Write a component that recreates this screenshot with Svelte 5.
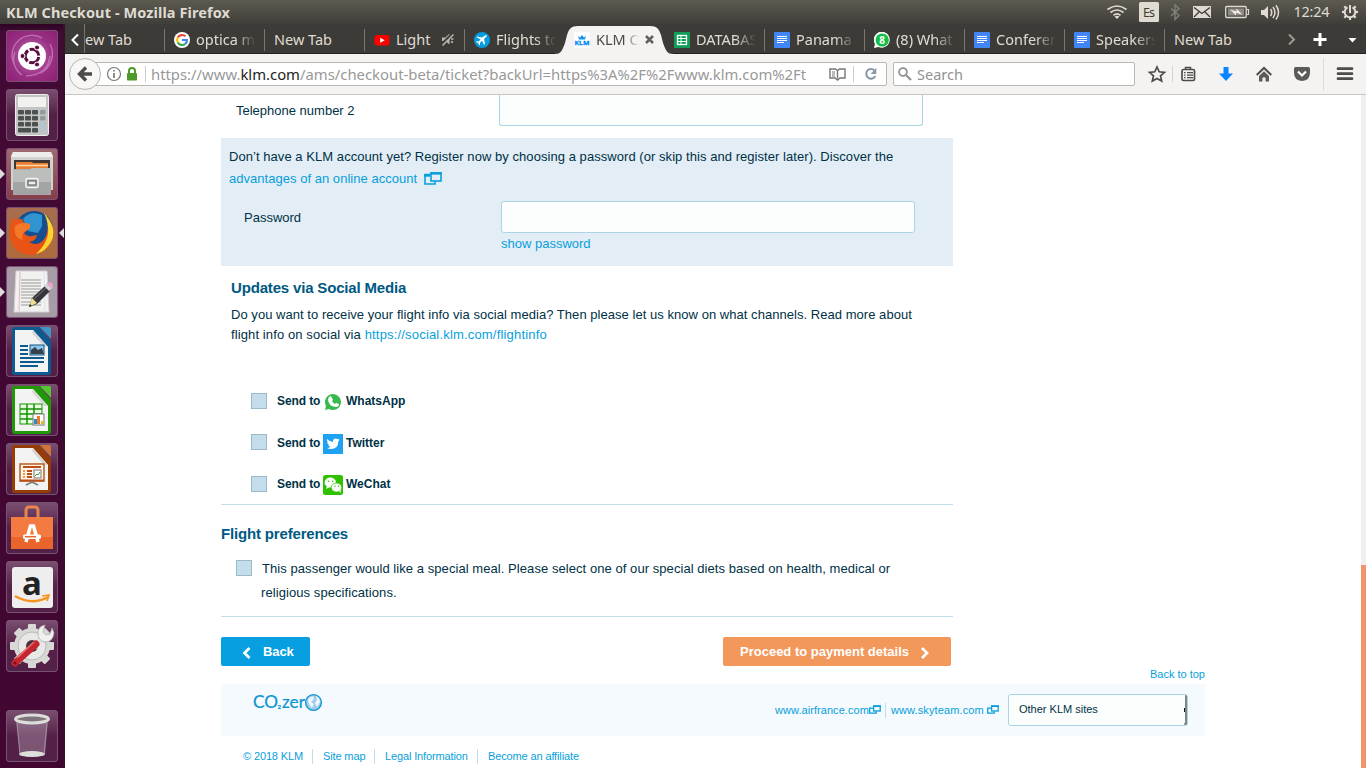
<script>
  const tabs = [
    { icon: '', text: 'ew Tab', first: true },
    { icon: 'google', text: 'optica m' },
    { icon: '', text: 'New Tab' },
    { icon: 'youtube', text: 'Light', muted: true },
    { icon: 'plane', text: 'Flights to' },
    { icon: 'klm', text: 'KLM C', active: true },
    { icon: 'sheet', text: 'DATABAS' },
    { icon: 'doc', text: 'Panama' },
    { icon: 'whats', text: '(8) What' },
    { icon: 'doc', text: 'Conferen' },
    { icon: 'doc', text: 'Speakers' },
    { icon: '', text: 'New Tab', last: true }
  ];
  const apps = ['dash', 'calc', 'files', 'firefox', 'gedit', 'writer', 'sheets', 'impress', 'software', 'amazon', 'settings', 'trash'];
  const running = ['files', 'firefox', 'gedit'];
  const office = {
    writer: ['#0c5a8f', '#3f95c6'],
    sheets: ['#1f9a06', '#53c832'],
    impress: ['#963c06', '#d0743a']
  };
  const socials = ['WhatsApp', 'Twitter', 'WeChat'];
</script>

<div class="screen">
  <header class="titlebar">
    <span class="wintitle">KLM Checkout - Mozilla Firefox</span>
    <svg class="tray" width="260" height="24" viewBox="1106 0 260 24">
      <g fill="none" stroke="#dfdbd2" stroke-width="1.7">
        <path d="M1107.500 9.500 Q1117 2.500 1126.500 9.500M1110.500 12.500 Q1117 7.500 1123.500 12.500M1113.500 15.300 Q1117 12.500 1120.500 15.300" />
      </g>
      <path d="M1114.500 16.500 Q1117 14.800 1119.500 16.500 L1117 19Z" fill="#dfdbd2" />
      <rect x="1139" y="2" width="20" height="20" rx="1.500" fill="#dfdbd2" />
      <text x="1143" y="17" font-size="12.500" fill="#3c3b37" textLength="12">Es</text>
      <path d="M1171 8.500 L1179 15.500 L1175 19.500 V5 L1179 8.500 L1171 16" fill="none" stroke="#85837c" stroke-width="1.300" />
      <rect x="1193" y="6" width="18" height="12" fill="#dfdbd2" />
      <path d="M1194 7.500 L1202 13.500 L1210 7.500M1194 17 L1199 12M1210 17 L1205 12" fill="none" stroke="#3c3b37" stroke-width="1.300" />
      <rect x="1225.700" y="6.500" width="20.500" height="11" rx="1" fill="none" stroke="#dfdbd2" stroke-width="1.300" />
      <rect x="1228" y="8.500" width="16" height="7" fill="#8f8c84" /><path d="M1247 9.500h1.500v5h-1.500" fill="none" stroke="#dfdbd2" stroke-width="1.200" />
      <path d="M1230 9.500 L1236.500 11.500 L1236.500 8.500 L1242.500 14.800 L1236 12.800 L1236 15.500Z" fill="#efece5" />
      <path d="M1261 10h3l4-4v13l-4-4h-3z" fill="#dfdbd2" />
      <path d="M1270.500 9 Q1273 12.500 1270.500 16M1273 7 Q1277 12.500 1273 18M1276 5.300 Q1281 12.500 1276 19.500" fill="none" stroke="#dfdbd2" stroke-width="1.500" />
      <text x="1293.500" y="17.300" font-size="14.500" fill="#dfdbd2" textLength="36">12:24</text>
      <g stroke="#dfdbd2" fill="none" transform="translate(1350 12)">
        <path d="M-2.500 -4.600 A5.300 5.300 0 1 0 2.500 -4.600" stroke-width="2" />
        <path d="M0 -7V1" stroke-width="2" />
        {#each [45, 90, 135, 180, 225, 270, 315] as a}<path d="M0 -5.500V-8" stroke-width="2.200" transform={`rotate(${a})`} />{/each}
      </g>
    </svg>
  </header>

  <div class="desktop">
    <nav class="launcher">
      {#each apps as app}
        <div class={`tile ${app}`}>
          {#if running.includes(app)}<i class="arrow"></i>{/if}
          {#if app === 'firefox'}<i class="arrow focus"></i>{/if}
          <svg width="52" height="52" viewBox="0 0 52 52">
            {#if app === 'dash'}
              <g fill="none" stroke="#d99bd0" stroke-opacity=".55" stroke-width="1.500">
                <path d="M8 34 A20 20 0 0 1 36 8M44 14 A21 21 0 0 1 34 43M16 45 A19 19 0 0 1 9 22M20 46 Q42 45 44 26" />
              </g>
              <circle cx="26" cy="26" r="14" fill="#fff" />
              <circle cx="26" cy="26" r="6.800" fill="none" stroke="#5b1042" stroke-width="3" stroke-dasharray="12.500 1.740" stroke-dashoffset="-1" />
              <g fill="#5b1042" stroke="#fff"><circle cx="16.500" cy="26" r="2.500" /><circle cx="31" cy="17.500" r="2.500" /><circle cx="31" cy="34.500" r="2.500" /></g>
            {:else if app === 'calc'}
              <rect x="9.500" y="5.500" width="33" height="41" rx="2" fill="#c4c4c2" stroke="#eee" />
              <rect x="12" y="8" width="28" height="10" fill="#f1f1ef" />
              {#each [0, 1, 2] as r}{#each [0, 1, 2] as c}<rect x={12 + c * 7} y={21 + r * 6} width="6" height="4.500" rx="1" fill="#4b5150" />{/each}<rect x="34" y={21 + r * 6} width="5.500" height="4.500" rx="1" fill="#8d9aa2" />{/each}
              <rect x="12" y="39" width="13" height="4.500" rx="1" fill="#4b5150" /><rect x="26" y="39" width="6" height="4.500" rx="1" fill="#4b5150" /><rect x="34" y="33" width="5.500" height="10.500" rx="1" fill="#b3c4cf" />
            {:else if app === 'files'}
              <path d="M7 4h38l2 4v34H5V8z" fill="#d2d2d0" /><path d="M7 4h38l2 5H5z" fill="#ededeb" />
              <path d="M8 12h36v10H8z" fill="#3b3634" /><path d="M10 14h16l1 1h15v7H10z" fill="#e87e34" /><path d="M10 17.500h32" stroke="#ffd8a5" stroke-width="1.500" />
              <path d="M7 21h17l2-1h19v27H7z" fill="#a3a5a4" /><path d="M7 21.500h17l2-1.500h19v14H7z" fill="#bcbebc" />
              <rect x="20" y="30.500" width="12" height="9" rx="1.500" fill="#b4b6b4" stroke="#f3f3f1" stroke-width="1.500" /><rect x="22" y="33" width="8" height="4" fill="#eee" stroke="#555" />
            {:else if app === 'firefox'}
              <circle cx="28" cy="23" r="19" fill="#164f91" /><path d="M17 12 Q24 3 36 8 L36 19 L32 26 L22 24Z" fill="#2f94cf" />
              <path d="M7 10 Q8 14 13 12 Q16 11 18 16 L24 17 L24 21 L18 26 Q21 31 31 28 Q30 34 23 35 Q34 41 40 29 Q43 20 41 12 Q49 19 47 30 Q43 45 27 48 Q8 48 4 31 Q3 18 7 10Z" fill="#e85416" />
              <path d="M38 6 Q51 20 46 33 Q40 45 30 47 Q40 38 42 27 Q43 16 38 6Z" fill="#ffd42c" />
              <path d="M9 19 Q15 14 24 17 L24 21 L18 25 Q15 29 17 33 Q7 31 9 19Z" fill="#f6792a" />
            {:else if app === 'gedit'}
              <path d="M10 5h31l2 41H8z" fill="#f1f1f0" stroke="#d4d1d2" /><path d="M14 6l-1 39" stroke="#e9b4bb" /><path d="M38 6l1 39" stroke="#dde3ee" />
              {#each [14, 17, 20, 23, 26, 29, 32, 36, 39] as y}<path d={`M15 ${y}h${y === 32 ? 14 : 20}`} stroke="#9b9b9b" />{/each}
              <path d="M23 41l3-9 13-12 5 5-13 13z" fill="#34353a" /><path d="M28 33l13-12" stroke="#777" /><path d="M23 41l3-9 5 5z" fill="#eddc92" /><path d="M23 41l1-3 2 2z" fill="#222" /><path d="M38 20l3-3 5 5-3 3z" fill="#d5d5d5" /><path d="M41 17q3-2 5 0t1 5l-1 1-5-5z" fill="#e8a2cc" />
            {:else if office[app]}
              <path d="M8 2h25l12 14v31q0 3-3 3H9q-3 0-3-3V5q0-3 2-3z" fill={office[app][0]} />
              <path d="M9 5h18l15 17v25H9z" fill="#f3f3f3" /><path d="M27 5l15 17h-4L26 8z" fill="#d6d6d6" /><path d="M34 2h9q2 0 2 2v10z" fill={office[app][1]} />
              {#if app === 'writer'}
                <g stroke="#0c5a8f" stroke-width="2"><path d="M14 21h8M14 25h8M14 29h8M14 33h24M14 37h24M14 41h18" /></g><rect x="24" y="20" width="14" height="10" fill="#8cc8ed" stroke="#145680" /><path d="M25 29v-4l4-3 3 3 4-2 2 6z" fill="#34424a" />
              {:else if app === 'sheets'}
                <rect x="14" y="20" width="22" height="20" fill="#e8ffe0" stroke="#169106" /><path d="M14 25h22M14 30h22M14 35h22M21 20v20M28 20v20" stroke="#169106" stroke-width="1.500" /><rect x="27" y="30" width="11" height="11" fill="#fff" stroke="#777" /><path d="M28 35h3v5h-3z" fill="#2b8bc9" /><path d="M31 32h3v8h-3z" fill="#ed7a28" /><path d="M35 37h2v3h-2z" fill="#eab900" />
              {:else}
                <rect x="14" y="21" width="24" height="17" fill="#fff4e8" stroke="#be5b1e" stroke-width="1.500" /><path d="M14 37.500h24M17 24h18M21 28h5M21 31h5M21 34h5" stroke="#b95018" stroke-width="2" /><path d="M17 28h2M17 31h2M17 34h2" stroke="#ed9558" stroke-width="2" /><rect x="28" y="27" width="7" height="8" fill="#fff" stroke="#777" /><path d="M29 33l2-2 1 1 2-3" fill="none" stroke="#39a336" /><path d="M26 38v2M20 42l6-3 6 3" fill="none" stroke="#777" stroke-width="1.500" />
              {/if}
            {:else if app === 'software'}
              <path d="M5 15h42v32H5z" fill="#e9652b" /><path d="M5 15h42v20H5z" fill="#f37a40" /><path d="M20 18v-9q0-4 3-4h6q3 0 3 4v9" fill="none" stroke="#e7854f" stroke-width="3" />
              <path d="M20 40l4.500-16h3L32 40" fill="none" stroke="#fff" stroke-width="3.500" /><rect x="17" y="32.500" width="18" height="4.500" rx="1.500" fill="#fff" /><path d="M19 34.700h11" stroke="#e9652b" stroke-width="1.500" />
            {:else if app === 'amazon'}
              <rect x="6" y="6" width="41" height="41" rx="3" fill="#eee" /><text x="16" y="34" font-size="33" font-weight="700" fill="#222">a</text><path d="M9 35 Q26 45 42 36" fill="none" stroke="#f6951e" stroke-width="2.500" /><path d="M36 35l7-1-2 6" fill="none" stroke="#f6951e" stroke-width="1.700" />
            {:else if app === 'settings'}
              <g fill="#d8d8d6">{#each [0, 45, 90, 135] as a}<rect x="22" y="4" width="8" height="44" rx="1" transform={`rotate(${a} 26 26)`} />{/each}<circle cx="26" cy="26" r="18" /></g><circle cx="26" cy="26" r="14" fill="#e8e8e6" stroke="#bbb" /><circle cx="26" cy="26" r="6" fill="#4d3344" /><path d="M28 27l8-9" stroke="#e4e4e2" stroke-width="6" />
              <path d="M39 5q-7 1-7 8 0 8 7 9 8 0 9-9l-2-5-2 6-4 1-3-3z" fill="#f0f0ee" stroke="#aaa" stroke-width=".7" /><path d="M9 43l21-19" stroke="#c3262e" stroke-width="7" stroke-linecap="round" /><path d="M11 38l17-16" stroke="#ee746f" stroke-width="1.300" /><circle cx="9" cy="43" r="1.500" fill="#701019" />
            {:else}
              <path d="M10 10l4 35q12 4 25 0l3-35z" fill="#d8d5df" opacity=".3" /><ellipse cx="26" cy="9" rx="16.500" ry="4" fill="#80737e" stroke="#ddddda" stroke-width="3" /><ellipse cx="26" cy="44" rx="13" ry="3" fill="#dededb" /><path d="M11 13l3 32M41 13l-3 32" stroke="#b9a6b8" opacity=".7" />
            {/if}
          </svg>
        </div>
      {/each}
    </nav>

    <section class="browser">
      <div class="tabs">
        <div class="scroll"><svg width="19" height="30" viewBox="0 0 19 30"><path d="M13 10.500l-5.500 5.500 5.500 5.500" fill="none" stroke="#fff" stroke-width="2" /></svg></div>
        {#each tabs as tab}
          <div class="tab" class:first={tab.first} class:active={tab.active} class:last={tab.last} class:before={tab.icon === 'plane'}>
            {#if tab.active}<svg class="shape" width="120" height="28" viewBox="0 0 120 28"><path d="M0 28 C7 28 8 25 11 17 L13 9 C15 3 17 0 24 0 H96 C103 0 105 3 107 9 L109 17 C112 25 113 28 120 28Z" fill="#f4f3f1" /></svg>{/if}
            {#if tab.icon}
              <svg class="fav" width="16" height="16" viewBox="0 0 16 16">
                {#if tab.icon === 'google'}
                  <circle cx="8" cy="8" r="8" fill="#fff" /><g fill="none" stroke-width="2.200"><path d="M11.500 4.300A5 5 0 0 0 3.800 5.500" stroke="#ea4335" /><path d="M3.800 5.500A5 5 0 0 0 3.800 10.500" stroke="#fbbc05" /><path d="M3.800 10.500A5 5 0 0 0 11.200 11.900" stroke="#34a853" /><path d="M11.200 11.900Q13 10.500 12.900 8H8" stroke="#4285f4" /></g>
                {:else if tab.icon === 'youtube'}<rect x="0.500" y="3" width="15" height="10.500" rx="2.500" fill="#f00" /><path d="M6.200 5.800l4.500 2.500-4.500 2.500z" fill="#fff" />
                {:else if tab.icon === 'plane'}<circle cx="8" cy="8" r="8" fill="#079bdf" /><path d="M12 3l1 1-3 3 1 5-1 .700L8 8.700l-2 2v2l-.800.600-1-2.400-2.200-1 .600-.700 2 .200 2-2-4-2.200.700-.800 4.700 1z" fill="#fff" />
                {:else if tab.icon === 'klm'}<rect width="16" height="16" fill="#fff" /><path d="M4 4l2 1.500L8 3l2 2.500L12 4l-1 3.500H5z" fill="#1695ed" /><text x="0.500" y="13.200" font-size="6" font-weight="700" fill="#098cf0" stroke="#098cf0" stroke-width=".3" textLength="15" lengthAdjust="spacingAndGlyphs">KLM</text>
                {:else if tab.icon === 'sheet'}<rect width="16" height="16" fill="#0f9d58" /><rect x="3.500" y="3.500" width="9" height="9" fill="none" stroke="#fff" stroke-width="1.300" /><path d="M3 6.500h10M3 9.500h10M7 3v10" stroke="#fff" />
                {:else if tab.icon === 'doc'}<rect width="16" height="16" rx="1" fill="#4285f4" /><path d="M3 4.500h10M3 6.500h10M3 8.500h10M3 10.500h7" stroke="#fff" />
                {:else}<path d="M0 16l1-4A8 8 0 1 1 4.500 15z" fill="#fff" /><circle cx="8.200" cy="8" r="6.600" fill="#0fc143" /><text x="5.300" y="11.700" font-size="10" font-weight="700" fill="#fff">8</text>{/if}
              </svg>
            {/if}
            <span class="label" class:short={tab.muted || tab.active} class:fade={tab.icon && !tab.muted}>{tab.text}</span>
            {#if tab.muted}<svg class="mute" width="13" height="13" viewBox="0 0 13 13"><path d="M1 4.500h3.500l4-4v11l-4-3.500H1z" fill="#b9b7b0" /><path d="M0 12L12 0" stroke="#3c3b37" stroke-width="2.500" /><path d="M1.500 12.500L12.500 1.500M10 6h2.500M10 8.500l2 1" stroke="#b9b7b0" stroke-width="1.500" /></svg>{/if}
            {#if tab.active}<svg class="close" width="9" height="9" viewBox="0 0 9 9"><path d="M1 1l7 7M8 1L1 8" stroke="#61615f" stroke-width="2.500" /></svg>{/if}
          </div>
        {/each}
        <svg class="tabctl" width="102" height="30" viewBox="1264 24 102 30"><path d="M1288 34.500l5 5-5 5" fill="none" stroke="#9c9a94" stroke-width="2" /><path d="M1312.500 39.500h13M1319 33v13" stroke="#fff" stroke-width="3" /><path d="M1347.500 38h8l-4 4.500z" fill="#fff" /></svg>
      </div>

      <div class="toolbar">
        <div class="back"><svg width="30" height="30" viewBox="0 0 30 30"><path d="M22 15H10M16 8.500L9.500 15l6.500 6.500" fill="none" stroke="#4c4c4a" stroke-width="3.400" /></svg></div>
        <div class="url">
          <svg width="16" height="16" viewBox="0 0 16 16"><circle cx="8" cy="8" r="6.500" fill="none" stroke="#777" stroke-width="1.200" /><path d="M8 7v5M8 4v1.500" stroke="#666" stroke-width="1.500" /></svg>
          <svg width="12" height="14" viewBox="0 0 12 14"><path d="M3 7V4q0-3 3-3t3 3v3" fill="none" stroke="#4d9a2a" stroke-width="2" /><rect x="1" y="6" width="10" height="7.500" rx=".7" fill="#4d9a2a" /></svg>
          <i class="bar"></i>
          <span class="address">https://www.<b>klm.com</b>/ams/checkout-beta/ticket?backUrl=https%3A%2F%2Fwww.klm.com%2Ft</span>
          <svg class="reader" width="17" height="14" viewBox="0 0 17 14"><path d="M1 2h5.500l2 1.500 2-1.500H16v9h-5l-2.500 2L6 11H1zM8.500 3.500v8" fill="none" stroke="#777" stroke-width="1.400" /><path d="M3 5h3M3 7h3M3 9h3" stroke="#777" /></svg>
          <i class="bar"></i>
          <svg class="reload" width="14" height="14" viewBox="0 0 14 14"><path d="M10.500 3.500A4.800 4.800 0 1 0 11.300 9" fill="none" stroke="#8999a9" stroke-width="2" /><path d="M12.300 1v6H6.500z" fill="#8999a9" /></svg>
        </div>
        <div class="search"><svg width="14" height="14" viewBox="0 0 14 14"><circle cx="5" cy="5" r="3.900" fill="none" stroke="#929292" stroke-width="1.800" /><path d="M8 8l5 5" stroke="#929292" stroke-width="2.200" /></svg><span>Search</span></div>
        <svg class="tools" width="231" height="40" viewBox="1135 54 231 40">
          <path d="M1157 67l2.200 4.800 5.300.600-4 3.500 1.200 5.200-4.700-2.700-4.700 2.700 1.200-5.200-4-3.500 5.300-.600z" fill="none" stroke="#4c4c4a" stroke-width="1.700" />
          <path d="M1172.500 66v16" stroke="#d5d3d0" /><path d="M1323.500 58v33" stroke="#dddbd8" />
          <rect x="1182" y="69.500" width="12.500" height="11" rx="1.500" fill="none" stroke="#4c4c4a" stroke-width="1.700" /><path d="M1185.500 69.500v-2h5v2" fill="none" stroke="#4c4c4a" stroke-width="1.500" /><path d="M1184 72.700h1.500M1184 75.200h1.500M1184 77.700h1.500M1187 72.700h6M1187 75.200h6M1187 77.700h6" stroke="#4c4c4a" stroke-width="1.200" />
          <path d="M1223.500 67h5v6.500h4.500l-7 7.500-7-7.500h4.500z" fill="#0a84ff" />
          <path d="M1256.700 75l7.300-7 7.300 7" fill="none" stroke="#4c4c4a" stroke-width="2" /><path d="M1259 76l5-4.800 5 4.800v5.500h-3.500v-4h-3v4h-3.500z" fill="#5b5b59" />
          <path d="M1295.500 67h13q1.500 0 1.500 1.500v4q0 8-8 8.500-8-.500-8-8.500v-4q0-1.500 1.500-1.500z" fill="#5b5b59" /><path d="M1298 71.500l4 4 4-4" fill="none" stroke="#fff" stroke-width="2.200" />
          <path d="M1338 68.700h14M1338 73.700h14M1338 78.700h14" stroke="#4c4c4a" stroke-width="2.700" stroke-linecap="round" />
        </svg>
      </div>

      <div class="viewport">
        <main>
          <div class="column">
            <div class="phone"><span>Telephone number 2</span><div class="input"></div></div>
            <div class="panel">
              <p class="intro">Don’t have a KLM account yet? Register now by choosing a password (or skip this and register later). Discover the</p>
              <p class="adv"><a href="#adv">advantages of an online account</a><svg width="18" height="13" viewBox="0 0 18 13"><path d="M6 2.500H1V12h10V9.500" fill="none" stroke="#079fdc" stroke-width="1.600" /><path d="M.200 3.500H6" stroke="#079fdc" stroke-width="2.400" /><rect x="7" y="1" width="10" height="8" fill="#e3edf6" stroke="#079fdc" stroke-width="1.600" /><path d="M6.200 1.400h11.600" stroke="#079fdc" stroke-width="2.400" /></svg></p>
              <div class="pass"><span>Password</span><div class="input"></div></div>
              <a class="show" href="#show">show password</a>
            </div>
            <h2 class="updates">Updates via Social Media</h2>
            <p class="social">
              <span class="s1">Do you want to receive your flight info via social media? Then please let us know on what channels. Read more about</span><br />
              <span class="s2">flight info on social via <a href="#social">https://social.klm.com/flightinfo</a></span>
            </p>
            <div class="channels">
              {#each socials as s}
                <div class={`channel ${s}`}><i class="check"></i><span class="send">Send to</span>
                  <svg width="20" height="20" viewBox="0 0 20 20">
                    {#if s === 'WhatsApp'}<path d="M2 18l1-4A8 8 0 1 1 6 17z" fill="#36b94d" /><path d="M6 5l2-1 2 4-1 1q1 2 3 3l1-1 3 1q0 3-3 3-8-1-8-8z" fill="#fff" />
                    {:else if s === 'Twitter'}<rect width="20" height="20" fill="#1da1f2" /><path d="M4 5q3 3 6 3-.500-3.500 3-3.500l2 .700 1.500-.500-1 1.700 1-.200-1.300 1.500q0 7.300-7.200 7.300-2.500 0-4-1 2 0 3.500-1.200-2-.300-2.500-2h1.200Q4 9.800 4 8l1.200.300Q3 6.500 4 5z" fill="#fff" />
                    {:else}<rect width="20" height="20" rx="2.500" fill="#2dc100" /><ellipse cx="7.300" cy="7.500" rx="5.700" ry="5" fill="#fff" /><path d="M3 14l1-3 3 1z" fill="#fff" /><ellipse cx="13.500" cy="12.500" rx="5.300" ry="4.500" fill="#fff" stroke="#2dc100" stroke-width=".8" /><path d="M16 16l2 2-.500-3z" fill="#fff" /><g fill="#2dc100"><circle cx="5.500" cy="6.300" r=".8" /><circle cx="9.500" cy="6.300" r=".8" /><circle cx="12" cy="11.300" r=".7" /><circle cx="15.500" cy="11.300" r=".7" /></g>{/if}
                  </svg><span class="name">{s}</span></div>
              {/each}
            </div>
            <section class="prefs">
              <h2>Flight preferences</h2>
              <div class="meal"><i class="check"></i><p><span class="m1">This passenger would like a special meal. Please select one of our special diets based on health, medical or</span><br /><span class="m2">religious specifications.</span></p></div>
            </section>
            <div class="actions">
              <button class="prev"><svg width="10" height="13" viewBox="0 0 10 13"><path d="M7.500 2l-5 5 5 5" fill="none" stroke="#fff" stroke-width="2.700" /></svg><span>Back</span></button>
              <button class="next"><span>Proceed to payment details</span><svg width="10" height="13" viewBox="0 0 10 13"><path d="M2 2l5 5-5 5" fill="none" stroke="#fff" stroke-width="2.700" /></svg></button>
            </div>
          </div>
          <a class="top" href="#top">Back to top</a>
          <footer>
            <svg class="zero" width="72" height="32" viewBox="0 -5 72 32">
              <g class="mark"><text x="0" y="16" font-size="17" textLength="25" lengthAdjust="spacingAndGlyphs">CO</text><text x="24.500" y="16.500" font-size="6" font-weight="700">2</text><text x="29" y="16" font-size="18" textLength="23" lengthAdjust="spacingAndGlyphs">zer</text></g>
              <circle cx="60.500" cy="10.500" r="7.900" fill="#9fcbec" stroke="#0a94d0" stroke-width="1.300" /><path d="M56 6l4-2 1 3-3 3 3 2-2 4-3-4-1-4zM63 4l3 2 1 4-3 5-2-4 2-3z" fill="#eef8fc" />
            </svg>
            <div class="partners"><a class="af" href="#af">www.airfrance.com</a>{@render out()}<i class="sep"></i><a class="st" href="#st">www.skyteam.com</a><span class="space"></span>{@render out()}</div>
            <div class="select"><span>Other KLM sites</span><i></i></div>
          </footer>
          <div class="legal"><a class="l1" href="#c">© 2018 KLM</a><a class="l2" href="#s">Site map</a><a class="l3" href="#l">Legal Information</a><a class="l4" href="#b">Become an affiliate</a></div>
        </main>
        <div class="scrollbar"><i></i></div>
      </div>
    </section>
  </div>
</div>

{#snippet out()}
  <svg class="out" width="12" height="9" viewBox="0 0 12 9"><path d="M4 3.200H.700v5h6.500V6.500" fill="none" stroke="#079fdc" stroke-width="1.300" /><rect x="4.600" y="1" width="6.600" height="5" fill="none" stroke="#079fdc" stroke-width="1.300" /><path d="M4 1.200h8" stroke="#079fdc" stroke-width="1.600" /></svg>
{/snippet}

<style>
  :global(body) { margin: 0; overflow: hidden; }
  * { box-sizing: border-box; }
  svg { display: block; flex: none; }
  p, h2 { margin: 0; }
  a { color: #079fdc; text-decoration: none; }
  .screen { width: 1366px; height: 768px; overflow: hidden; display: flex; flex-direction: column; font-family: "Noto Sans", sans-serif; background: #fff; white-space: nowrap; }
  .titlebar { height: 24px; flex: none; display: flex; justify-content: space-between; align-items: center; background: linear-gradient(#5d5a50, #3f3e39); color: #dfdbd2; }
  .wintitle { padding-left: 6px; font-size: 14.500px; letter-spacing: .1px; font-weight: 700; line-height: 22px; }
  .desktop { flex: 1; display: flex; min-height: 0; }
  .launcher { width: 65px; flex: none; background: linear-gradient(#2d0323, #430a35 8px, #410632); border-right: 2px solid #30122a; padding: 6px 0 0 6px; display: flex; flex-direction: column; gap: 7px; }
  .tile { width: 52px; height: 52px; flex: none; position: relative; border-radius: 4px; background: linear-gradient(#7b5072, #552047 50%, #532047); box-shadow: inset 0 0 0 1px #775170; }
  .tile.dash { background: radial-gradient(circle, #c97abc, #993083 55%, #8c1d73); }
  .tile.files { background: linear-gradient(#a06972, #853d4a); }
  .tile.firefox { background: linear-gradient(#a76d4f, #ae6a3d); }
  .tile.gedit { background: #a79ca5; }
  .tile.trash { margin-top: 31px; }
  .arrow { position: absolute; left: -6px; top: 21px; border: 5px solid transparent; border-left-color: #ddd; border-right: 0; }
  .arrow.focus { left: auto; right: -6px; border: 5px solid transparent; border-right-color: #ddd; border-left: 0; }
  .browser { flex: 1; min-width: 0; display: flex; flex-direction: column; }
  .tabs { height: 30px; flex: none; display: flex; background: #3c3b37; color: #e0dcd3; font-size: 14.500px; border-bottom: 1px solid #242321; }
  .scroll { width: 20px; flex: none; border-right: 1px solid #777570; }
  .tab { width: 100px; flex: none; height: 30px; position: relative; display: flex; align-items: center; padding: 0 0 0 9px; gap: 6px; }
  .tab::after { content: ""; position: absolute; right: 0; top: 5px; height: 22px; width: 1px; background: #777570; }
  .tab.first { width: 80px; padding-left: 0; }
  .tab.active::after, .tab.before::after, .tab.last::after { display: none; }
  .label { overflow: hidden; width: 62px; position: relative; }
  .label.fade { mask-image: linear-gradient(90deg, #000 65%, transparent); width: 60px; }
  .label.short { width: 39px; flex: none; }
  .label.short.fade { width: 43px; }
  .fav { margin-top: 2px; }
  .active { color: #4a4a4a; }
  .shape { position: absolute; left: -11px; top: 2px; }
  .fav, .close { position: relative; }
  .tabctl { margin-left: auto; }
  .toolbar { height: 41px; flex: none; display: flex; align-items: center; background: #f4f3f1; border-bottom: 1px solid #c9c6c2; }
  .back { width: 32px; height: 32px; flex: none; margin-left: 4px; border: 1px solid #b7b5b1; border-radius: 50%; background: #f8f7f6; position: relative; z-index: 1; }
  .url { width: 800px; flex: none; height: 24px; margin-left: -14px; padding-left: 18px; background: #fff; border: 1px solid #bbb8b3; border-radius: 2px; display: flex; align-items: center; }
  .url svg + svg { margin-left: 4px; }
  .bar { width: 1px; height: 16px; background: #ccc; margin-left: 7px; }
  .address { width: 658px; margin-left: 5px; font-size: 14.830px; line-height: 22px; color: #999; overflow: hidden; }
  .address b { font-weight: 400; color: #222; }
  .reader { margin-left: 20px; }
  .reload { margin-left: 10px; }
  .search { width: 242px; flex: none; height: 24px; margin-left: 6px; padding-left: 4px; background: #fff; border: 1px solid #bbb8b3; border-radius: 2px; display: flex; align-items: center; gap: 5px; font-size: 14.500px; color: #929292; }
  .viewport { flex: 1; min-height: 0; display: flex; justify-content: space-between; font-family: "Liberation Sans", Arial, sans-serif; font-size: 13px; color: #003145; }
  main { padding-left: 156px; width: 1140px; }
  .column { width: 732px; }
  .phone { height: 31px; display: flex; padding: 0 30px 0 15px; justify-content: space-between; line-height: 31px; }
  .input { border: 1px solid #a8d4e3; border-radius: 3px; background: #fcfefe; }
  .phone .input { width: 424px; border-top: 0; border-radius: 0 0 3px 3px; }
  .panel { height: 128px; margin-top: 12px; background: #e3edf6; padding: 8px 8px 0; line-height: 22px; }
  .intro { letter-spacing: .053px; }
  .adv { display: flex; align-items: center; gap: 7px; letter-spacing: .03px; }
  .adv svg { margin-top: -2px; }
  .pass { display: flex; justify-content: space-between; padding: 0 30px 0 15px; line-height: 34px; height: 32px; margin-top: 11px; }
  .pass .input { width: 414px; height: 32px; }
  .show { display: block; margin-left: 272px; }
  h2 { font-size: 15px; line-height: 20px; color: #005983; letter-spacing: -.17px; }
  .updates { margin: 12px 0 0 10px; }
  .social { margin: 7px 0 0 10px; line-height: 20px; }
  .s1 { letter-spacing: .041px; }
  .s2 { letter-spacing: .11px; }
  .s2 a { letter-spacing: .18px; }
  .channels { padding: 35px 0 0 30px; height: 159px; }
  .channel { display: flex; align-items: center; height: 41.500px; font-weight: 700; font-size: 12px; }
  .channel svg { margin-top: 2px; }
  .channel.Twitter svg { margin-top: 3px; }
  .channel.Twitter span { padding-top: 1px; }
  .check { width: 16px; height: 16px; flex: none; background: #c3deea; border: 1px solid #9ab9c9; }
  .send { width: 44px; margin: 0 2px 0 10px; letter-spacing: -.1px; }
  .name { margin-left: 3px; }
  .prefs { border: solid #c1dfea; border-width: 1px 0; height: 113px; padding-top: 19px; }
  .meal { display: flex; padding-left: 15px; margin-top: 13px; line-height: 24px; }
  .meal .check { margin-top: 3px; }
  .meal p { margin-left: 9px; }
  .m1 { margin-left: 1px; letter-spacing: .062px; }
  .m2 { letter-spacing: .08px; }
  .actions { display: flex; justify-content: space-between; padding: 20px 2px 0 0; }
  button { height: 29px; border: 0; border-radius: 2px; color: #fff; font: 700 13px "Liberation Sans", Arial, sans-serif; display: flex; align-items: center; padding: 0; }
  button svg { margin-top: 1px; }
  .prev { width: 89px; background: #079fdf; padding-left: 21px; gap: 11px; letter-spacing: -.1px; }
  .next { width: 228px; background: #f3985b; padding-left: 17px; gap: 11px; }
  .top { display: block; width: 984px; height: 18px; text-align: right; font-size: 11px; line-height: 16px; }
  footer { width: 984px; height: 52px; background: #f4fafd; display: flex; align-items: center; font-size: 11px; }
  .zero { margin: -14px 0 0 32px; }
  .mark { font-family: Lato, sans-serif; fill: #0a94d0; stroke: #0a94d0; stroke-width: .2; }
  .partners { display: flex; align-items: center; margin-left: 450px; width: 233px; }
  .partners a { margin-top: -1px; }
  .out { margin-top: -2px; }
  .af { letter-spacing: .06px; }
  .st { letter-spacing: .12px; }
  .sep { width: 1px; height: 15px; margin: 0 5px 0 4px; background: #c1dfea; }
  .space { width: 3px; }
  .select { width: 180px; height: 32px; border: 1px solid #a8d4e3; border-radius: 3px; background: #fcfefe; line-height: 29px; padding-left: 10px; display: flex; justify-content: space-between; }
  .select i { width: 3px; border-right: 2px solid #858585; border-bottom: 2px solid #858585; border-radius: 2px; position: relative; }
  .select i::after { content: ""; position: absolute; left: 0; top: 13px; width: 1px; height: 4px; background: #111; }
  .legal { display: flex; align-items: center; height: 40px; padding-left: 22px; font-size: 11px; letter-spacing: -.13px; }
  .legal a { line-height: 15px; margin-right: 10px; border-right: 1px solid #c1dfea; }
  .l1 { width: 70px; }
  .l2 { width: 52px; }
  .l3 { width: 93px; }
  .legal a:last-child { border: 0; }
  .scrollbar { width: 5px; background: #f0efee; padding-top: 470px; }
  .scrollbar i { display: block; height: 203px; background: #f2946b; }
</style>
